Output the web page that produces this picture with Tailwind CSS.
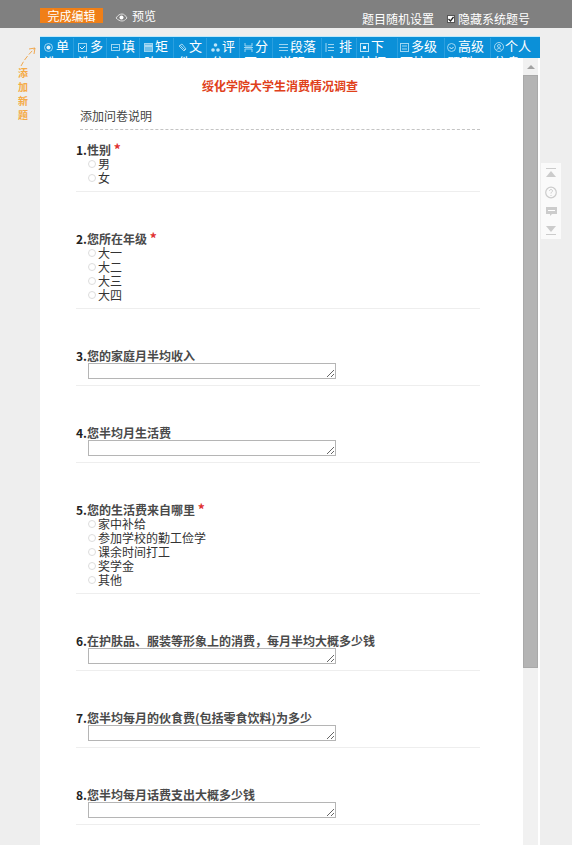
<!DOCTYPE html>
<html lang="zh-CN">
<head>
<meta charset="UTF-8">
<title>绥化学院大学生消费情况调查</title>
<script src="https://cdn.jsdelivr.net/npm/@tailwindcss/browser@4"></script>
</head>
<body class="bg-[#eeeeee] h-[845px] overflow-hidden font-['Noto_Sans_CJK_SC','Noto_Sans',sans-serif] text-[12px] text-[#333]">
  <!-- top bar -->
  <header class="h-[28px] bg-[#808080] text-white flex pl-[40px] pr-[42px]">
    <button class="w-[63px] h-[15px] mt-[8px] bg-[#f07f17] text-[12px] leading-[15px] text-center">完成编辑</button>
    <div class="flex items-center h-[15px] mt-[8px] ml-[12px] gap-[4px]">
      <svg width="13" height="10" viewBox="0 0 13 10" class="mt-[2px]"><path d="M1 6c2-3 4-4 6-4s3 1 5 4c-2 2-3 3-5 3S3 8 1 6z" fill="none" stroke="#ddd"/><circle cx="6.5" cy="5.5" r="2" fill="#fff"/></svg>
      <span>预览</span>
    </div>
    <div class="ml-auto flex items-center h-[15px] mt-[11px]">
      <span>题目随机设置</span>
      <span class="w-[8px] h-[8px] ml-[13px] mr-[3px] bg-white border border-[#555] flex items-center justify-center">
        <svg width="6" height="6" viewBox="0 0 6 6"><path d="M0.5 3l2 2 3-4" fill="none" stroke="#222" stroke-width="1.3"/></svg>
      </span>
      <span>隐藏系统题号</span>
    </div>
  </header>

  <div class="flex pt-[8px]">
    <!-- left hint -->
    <aside class="w-[40px] shrink-0">
      <svg width="24" height="22" viewBox="0 0 24 22" class="ml-[14px] mt-[9px]"><path d="M7 21C10 15 14 10 21 3" fill="none" stroke="#f0a850" stroke-dasharray="5 2"/><path d="M15 4l6-1-1 6" fill="none" stroke="#f0a850"/></svg>
      <div class="ml-[18px] mt-[1px] w-[12px] flex flex-col gap-[4px] text-[10px] leading-[10px] font-bold text-[#f5aa45]">
        <span>添</span><span>加</span><span>新</span><span>题</span>
      </div>
    </aside>

    <div class="w-[500px] shrink-0">
      <!-- question type toolbar -->
      <nav class="h-[22px] bg-[#0b90d8] border-t border-[#bfe9fb] flex overflow-hidden text-white text-[13px] leading-[16px] pt-[1px]">
        <a class="w-[34px] pl-[4px] border-r border-[#2a9fdf] shrink-0"><svg class="inline-block align-[-1px] mr-[3px]" width="9" height="9" viewBox="0 0 9 9"><circle cx="4.500" cy="4.500" r="4" fill="none" stroke="#9fd6f2"/><circle cx="4.500" cy="4.500" r="2" fill="#dff2fb"/></svg>单选</a>
        <a class="w-[33px] pl-[4px] border-r border-[#2a9fdf] shrink-0"><svg class="inline-block align-[-1px] mr-[3px]" width="9" height="9" viewBox="0 0 9 9"><rect x=".5" y=".5" width="8" height="8" fill="none" stroke="#9fd6f2"/><path d="M2 4l2 2 3-3" fill="none" stroke="#dff2fb"/></svg>多选</a>
        <a class="w-[33px] pl-[4px] border-r border-[#2a9fdf] shrink-0"><svg class="inline-block align-[-1px] mr-[2px]" width="9" height="9" viewBox="0 0 9 9"><rect x=".5" y="1.500" width="8" height="6" fill="none" stroke="#9fd6f2"/><path d="M2 4.500h5" stroke="#9fd6f2"/></svg>填空</a>
        <a class="w-[34px] pl-[4px] border-r border-[#2a9fdf] shrink-0"><svg class="inline-block align-[-1px] mr-[2px]" width="9" height="9" viewBox="0 0 9 9"><rect x=".5" y=".5" width="8" height="8" fill="#6fbfe9" stroke="#9fd6f2"/><path d="M1 3h7" stroke="#dff2fb"/></svg>矩阵</a>
        <a class="w-[33px] pl-[4px] border-r border-[#2a9fdf] shrink-0"><svg class="inline-block align-[-1px] mr-[2px]" width="9" height="9" viewBox="0 0 9 9"><path d="M2 2l5 5M4 1l4 5-2 2-5-5z" fill="none" stroke="#9fd6f2"/></svg>文件</a>
        <a class="w-[33px] pl-[4px] border-r border-[#2a9fdf] shrink-0"><svg class="inline-block align-[-1px] mr-[2px]" width="9" height="9" viewBox="0 0 9 9"><circle cx="4.500" cy="2" r="1.800" fill="#bfe5f8"/><circle cx="2" cy="7" r="1.800" fill="#bfe5f8"/><circle cx="7" cy="7" r="1.800" fill="#bfe5f8"/></svg>评分</a>
        <a class="w-[33px] pl-[4px] border-r border-[#2a9fdf] shrink-0"><svg class="inline-block align-[-1px] mr-[2px]" width="9" height="9" viewBox="0 0 9 9"><path d="M1 0v3h7V0M1 9V6h7v3M0 4.500h9" fill="none" stroke="#9fd6f2"/></svg>分页</a>
        <a class="w-[49px] pl-[6px] border-r border-[#2a9fdf] shrink-0"><svg class="inline-block align-[-1px] mr-[2px]" width="9" height="9" viewBox="0 0 9 9"><path d="M0 1.500h9M0 4.500h9M0 7.500h9" stroke="#9fd6f2"/></svg>段落说明</a>
        <a class="w-[35px] pl-[3px] border-r border-[#2a9fdf] shrink-0"><svg class="inline-block align-[-1px] mr-[5px]" width="9" height="9" viewBox="0 0 9 9"><path d="M3 1.500h6M3 4.500h6M3 7.500h6M1 0v9" stroke="#9fd6f2"/></svg>排序</a>
        <a class="w-[41px] pl-[3px] pr-[4px] border-r border-[#2a9fdf] shrink-0"><svg class="inline-block align-[-1px] mr-[2px]" width="9" height="9" viewBox="0 0 9 9"><rect x=".5" y=".5" width="8" height="8" fill="none" stroke="#bfe5f8"/><rect x="3" y="3" width="3" height="3" fill="#dff2fb"/></svg>下拉框</a>
        <a class="w-[47px] pl-[2px] border-r border-[#2a9fdf] shrink-0"><svg class="inline-block align-[-1px] mr-[2px]" width="9" height="9" viewBox="0 0 9 9"><rect x=".5" y=".5" width="8" height="8" fill="none" stroke="#9fd6f2"/><path d="M2 3h5M2 6h5" stroke="#9fd6f2"/></svg>多级下拉</a>
        <a class="w-[46px] pl-[2px] border-r border-[#2a9fdf] shrink-0"><svg class="inline-block align-[-1px] mr-[2px]" width="9" height="9" viewBox="0 0 9 9"><circle cx="4.500" cy="4.500" r="4" fill="none" stroke="#9fd6f2"/><path d="M2.500 4l2 2 2-2" fill="none" stroke="#dff2fb"/></svg>高级题型</a>
        <a class="w-[42px] pl-[3px] shrink-0"><svg class="inline-block align-[-1px] mr-[1px]" width="10" height="10" viewBox="0 0 10 10"><circle cx="5" cy="5" r="4.500" fill="none" stroke="#9fd6f2"/><circle cx="5" cy="4" r="1.500" fill="none" stroke="#9fd6f2"/><path d="M2.500 8c1-2 4-2 5 0" fill="none" stroke="#9fd6f2"/></svg>个人信息</a>
      </nav>

      <div class="h-[787px] bg-white flex overflow-hidden">
        <!-- survey -->
        <main class="w-[483px] shrink-0 pl-[36px] pr-[43px] overflow-hidden">
          <h1 class="pt-[19px] pl-[4px] text-center font-bold text-[12px] leading-[17px] text-[#e0401a]">绥化学院大学生消费情况调查</h1>
          <p class="mt-[13px] ml-[4px] h-[23px] border-b border-dashed border-[#c4c4c4] leading-[17px] text-[#444]">添加问卷说明</p>

          <section class="mt-[12px] border-b border-[#eeeeee] pb-[6px]">
            <h2 class="font-bold leading-[15px] text-[#4a4a4a]"><b class="font-bold text-[#222]">1.</b>性别 <span class="text-[#e03030] text-[14px] leading-[12px]">*</span></h2>
            <div class="pl-[12px] leading-[14px]">
              <label class="flex items-center gap-[2px]"><i class="w-[8px] h-[8px] rounded-full border border-[#ddd]"></i>男</label>
              <label class="flex items-center gap-[2px]"><i class="w-[8px] h-[8px] rounded-full border border-[#ddd]"></i>女</label>
            </div>
          </section>

          <section class="mt-[39px] border-b border-[#eeeeee] pb-[6px]">
            <h2 class="font-bold leading-[15px] text-[#4a4a4a]"><b class="font-bold text-[#222]">2.</b>您所在年级 <span class="text-[#e03030] text-[14px] leading-[12px]">*</span></h2>
            <div class="pl-[12px] leading-[14px]">
              <label class="flex items-center gap-[2px]"><i class="w-[8px] h-[8px] rounded-full border border-[#ddd]"></i>大一</label>
              <label class="flex items-center gap-[2px]"><i class="w-[8px] h-[8px] rounded-full border border-[#ddd]"></i>大二</label>
              <label class="flex items-center gap-[2px]"><i class="w-[8px] h-[8px] rounded-full border border-[#ddd]"></i>大三</label>
              <label class="flex items-center gap-[2px]"><i class="w-[8px] h-[8px] rounded-full border border-[#ddd]"></i>大四</label>
            </div>
          </section>

          <section class="mt-[39px] border-b border-[#eeeeee] pb-[6px]">
            <h2 class="font-bold leading-[15px] text-[#4a4a4a]"><b class="font-bold text-[#222]">3.</b>您的家庭月半均收入</h2>
            <textarea class="block ml-[12px] w-[248px] h-[16px] border border-[#b5b5b5] resize overflow-hidden"></textarea>
          </section>

          <section class="mt-[39px] border-b border-[#eeeeee] pb-[6px]">
            <h2 class="font-bold leading-[15px] text-[#4a4a4a]"><b class="font-bold text-[#222]">4.</b>您半均月生活费</h2>
            <textarea class="block ml-[12px] w-[248px] h-[16px] border border-[#b5b5b5] resize overflow-hidden"></textarea>
          </section>

          <section class="mt-[39px] border-b border-[#eeeeee] pb-[6px]">
            <h2 class="font-bold leading-[15px] text-[#4a4a4a]"><b class="font-bold text-[#222]">5.</b>您的生活费来自哪里 <span class="text-[#e03030] text-[14px] leading-[12px]">*</span></h2>
            <div class="pl-[12px] leading-[14px]">
              <label class="flex items-center gap-[2px]"><i class="w-[8px] h-[8px] rounded-full border border-[#ddd]"></i>家中补给</label>
              <label class="flex items-center gap-[2px]"><i class="w-[8px] h-[8px] rounded-full border border-[#ddd]"></i>参加学校的勤工俭学</label>
              <label class="flex items-center gap-[2px]"><i class="w-[8px] h-[8px] rounded-full border border-[#ddd]"></i>课余时间打工</label>
              <label class="flex items-center gap-[2px]"><i class="w-[8px] h-[8px] rounded-full border border-[#ddd]"></i>奖学金</label>
              <label class="flex items-center gap-[2px]"><i class="w-[8px] h-[8px] rounded-full border border-[#ddd]"></i>其他</label>
            </div>
          </section>

          <section class="mt-[39px] border-b border-[#eeeeee] pb-[6px]">
            <h2 class="font-bold leading-[15px] text-[#4a4a4a]"><b class="font-bold text-[#222]">6.</b>在护肤品、服装等形象上的消费，每月半均大概多少钱</h2>
            <textarea class="block ml-[12px] w-[248px] h-[16px] border border-[#b5b5b5] resize overflow-hidden"></textarea>
          </section>

          <section class="mt-[39px] border-b border-[#eeeeee] pb-[6px]">
            <h2 class="font-bold leading-[15px] text-[#4a4a4a]"><b class="font-bold text-[#222]">7.</b>您半均每月的伙食费(包括零食饮料)为多少</h2>
            <textarea class="block ml-[12px] w-[248px] h-[16px] border border-[#b5b5b5] resize overflow-hidden"></textarea>
          </section>

          <section class="mt-[39px] border-b border-[#eeeeee] pb-[6px]">
            <h2 class="font-bold leading-[15px] text-[#4a4a4a]"><b class="font-bold text-[#222]">8.</b>您半均每月话费支出大概多少钱</h2>
            <textarea class="block ml-[12px] w-[248px] h-[16px] border border-[#b5b5b5] resize overflow-hidden"></textarea>
          </section>
        </main>

        <!-- scrollbar -->
        <div class="w-[15px] shrink-0 bg-[#f1f1f1] flex flex-col items-center">
          <div class="h-[17px] flex items-center"><i class="w-0 h-0 border-x-[4px] border-x-transparent border-b-[4px] border-b-[#a3a3a3]"></i></div>
          <div class="w-full h-[593px] bg-[#b4b4b4] border border-[#a9a9a9]"></div>
        </div>
        <div class="w-[2px] shrink-0"></div>
      </div>
    </div>

    <!-- side tools -->
    <aside class="ml-[1px] mt-[127px] w-[20px] h-[76px] bg-white/70 flex flex-col items-center justify-around shrink-0">
      <svg width="12" height="12" viewBox="0 0 12 12"><path d="M1 1.500h10" stroke="#ccc"/><path d="M6 4l5 6H1z" fill="#ccc"/></svg>
      <svg width="12" height="13" viewBox="0 0 12 13"><circle cx="6" cy="6.500" r="5.300" fill="none" stroke="#ccc" stroke-width="1.200"/><path d="M4.500 5c0-2 3-2 3 0 0 1-1.500 1-1.500 2.500M6 9v1" fill="none" stroke="#ccc"/></svg>
      <svg width="13" height="11" viewBox="0 0 13 11"><path d="M1 1h11v7H7l-2 2V8H1z" fill="#ccc"/><path d="M3 4.500h7" stroke="#fff"/></svg>
      <svg width="12" height="12" viewBox="0 0 12 12"><path d="M1 10.500h10" stroke="#ccc"/><path d="M6 8L1 2h10z" fill="#ccc"/></svg>
    </aside>
  </div>
</body>
</html>
